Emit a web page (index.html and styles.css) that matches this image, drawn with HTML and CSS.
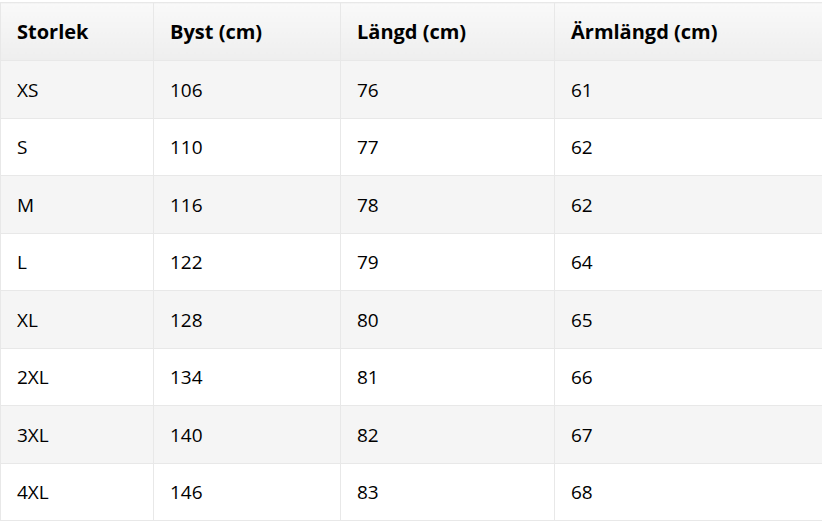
FILE: index.html
```html
<!DOCTYPE html>
<html lang="sv">
<head>
<meta charset="utf-8">
<link rel="stylesheet" href="styles.css">
</head>
<body>
<table class="size-table">
  <colgroup>
    <col class="c1"><col class="c2"><col class="c3"><col class="c4">
  </colgroup>
  <thead>
    <tr><th>Storlek</th><th>Byst (cm)</th><th>Längd (cm)</th><th>Ärmlängd (cm)</th></tr>
  </thead>
  <tbody>
    <tr><td>XS</td><td>106</td><td>76</td><td>61</td></tr>
    <tr><td>S</td><td>110</td><td>77</td><td>62</td></tr>
    <tr><td>M</td><td>116</td><td>78</td><td>62</td></tr>
    <tr><td>L</td><td>122</td><td>79</td><td>64</td></tr>
    <tr><td>XL</td><td>128</td><td>80</td><td>65</td></tr>
    <tr><td>2XL</td><td>134</td><td>81</td><td>66</td></tr>
    <tr><td>3XL</td><td>140</td><td>82</td><td>67</td></tr>
    <tr><td>4XL</td><td>146</td><td>83</td><td>68</td></tr>
  </tbody>
</table>
</body>
</html>
```

FILE: styles.css
```css
html, body {
  margin: 0;
  padding: 0;
  background: #ffffff;
}
body {
  padding-top: 2px;
  font-family: "Open Sans", "Noto Sans", sans-serif;
  color: #000000;
}
.size-table {
  border-collapse: collapse;
  table-layout: fixed;
  width: 830px;
}
.c1 { width: 153px; }
.c2 { width: 187px; }
.c3 { width: 214px; }
.c4 { width: 276px; }
.size-table th,
.size-table td {
  border: 1px solid #e8e8e8;
  padding: 1px 0 0 16px;
  text-align: left;
  height: 57.5px;
  box-sizing: border-box;
  font-size: 19px;
  color: #000000;
}
.size-table th {
  height: 58px;
  padding-top: 0;
  font-size: 20px;
  font-weight: 700;
  background: linear-gradient(#f9f9f9, #eeeeee);
}
.size-table tbody tr:nth-child(odd) td {
  background: #f5f5f5;
}
.size-table tbody tr:nth-child(even) td {
  background: #ffffff;
}
```
